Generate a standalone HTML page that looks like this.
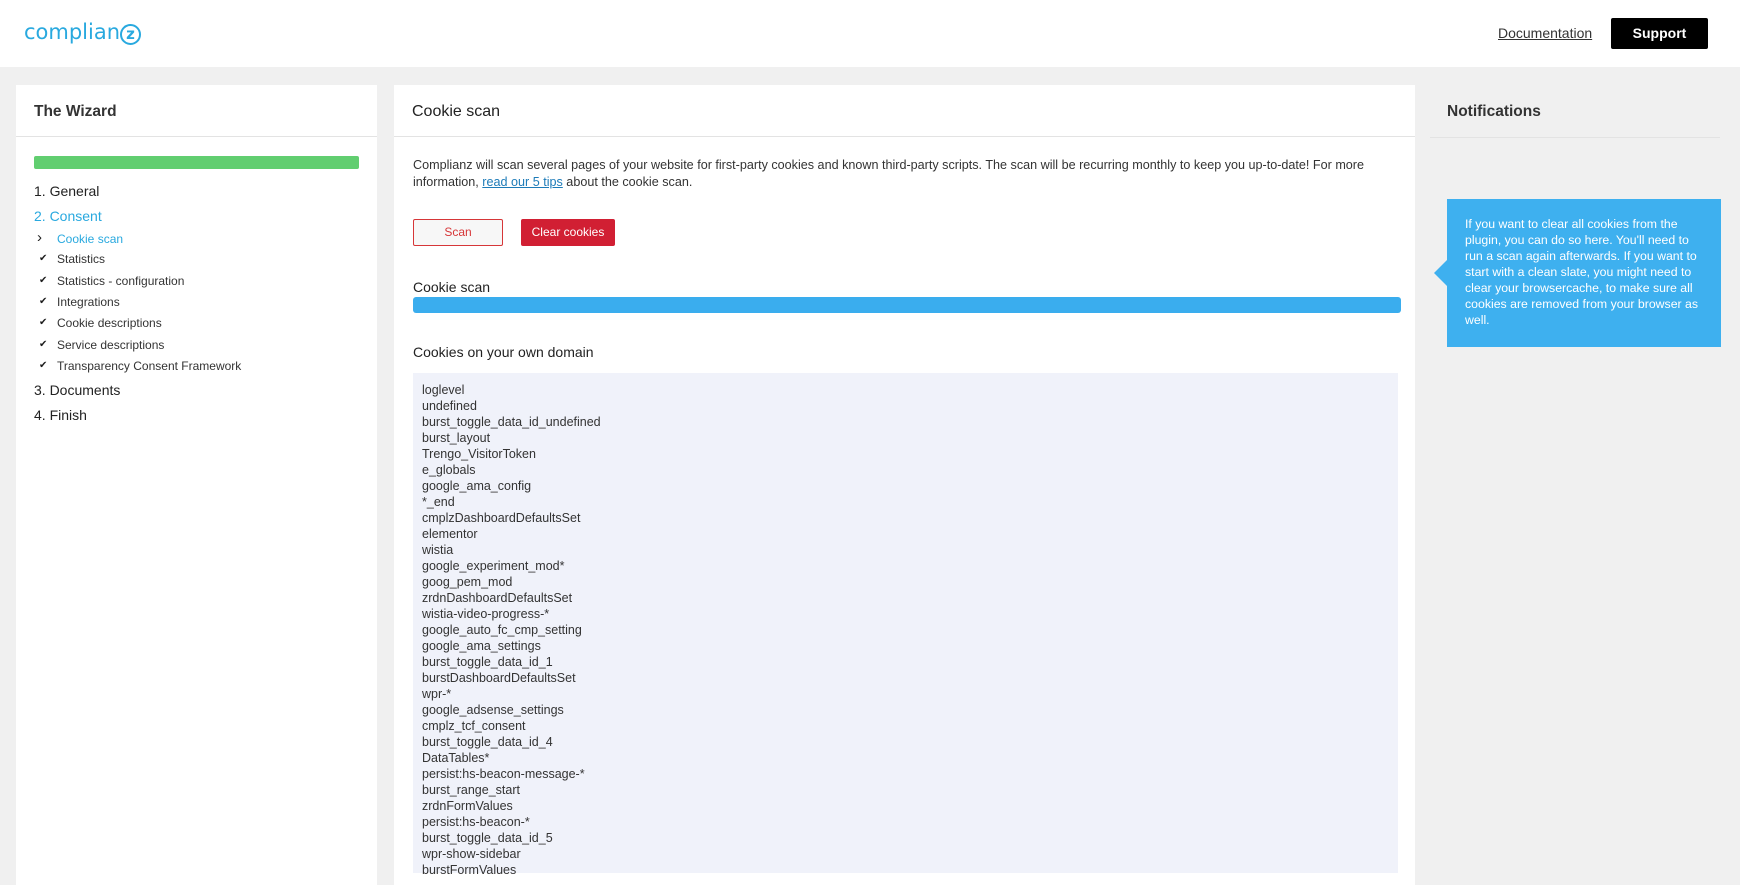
<!DOCTYPE html>
<html><head><meta charset="utf-8"><style>
*{box-sizing:border-box;margin:0;padding:0}
body{width:1740px;height:868px;overflow:hidden;background:#f0f0f0;font-family:"Liberation Sans",sans-serif;color:#1e1e1e;position:relative}
.hdr{position:absolute;left:0;top:0;width:1740px;height:67px;background:#fff}
.logo{position:absolute;left:24px;top:20px;font-size:21px;color:#29a9df;letter-spacing:0;font-family:"DejaVu Sans",sans-serif;font-weight:normal}
.doc{position:absolute;left:1498px;top:25px;font-size:14px;text-decoration:underline;color:#333}
.sup{position:absolute;left:1611px;top:18px;width:97px;height:31px;background:#000;color:#fff;font-size:14px;font-weight:bold;text-align:center;line-height:31px;border-radius:2px}
.panel{position:absolute;top:85px;background:#fff;height:800px}
.ph{height:52px;border-bottom:1px solid #e3e3e3;font-size:15.5px;font-weight:bold;color:#333;padding:18px 0 0 18px}
.abs{position:absolute}
.nav{font-size:14px;color:#222}
.sub{font-size:12px;color:#333}
.chk{position:absolute;left:39px;font-size:10px}
.list{position:absolute;left:413px;top:373px;width:985px;height:500px;background:#f0f2fa;padding:9px 9px;font-size:12.5px;line-height:16px;color:#333}
</style></head><body>
<div class="hdr">
<div class="logo">complian<span style="display:inline-block;width:21px;height:21px;border:2px solid #29a9df;border-radius:50%;font-size:15px;line-height:17px;text-align:center;vertical-align:0px;font-weight:bold">z</span></div>
<div class="doc">Documentation</div>
<div class="sup">Support</div>
</div>

<div class="panel" style="left:16px;width:361px">
<div class="ph" style="padding-left:18px">The Wizard</div>
</div>
<div class="abs" style="left:34px;top:156px;width:325px;height:13px;background:#61ce70;border-radius:2px"></div>
<div class="abs nav" style="left:34px;top:183px">1. General</div>
<div class="abs nav" style="left:34px;top:208px;color:#29a9df">2. Consent</div>
<div class="abs" style="left:37px;top:229px;font-size:15px">&#x203A;</div>
<div class="abs sub" style="left:57px;top:232px;color:#29a9df">Cookie scan</div>
<div class="chk" style="top:253px">✔</div><div class="abs sub" style="left:57px;top:252px">Statistics</div>
<div class="chk" style="top:275px">✔</div><div class="abs sub" style="left:57px;top:274px">Statistics - configuration</div>
<div class="chk" style="top:296px">✔</div><div class="abs sub" style="left:57px;top:295px">Integrations</div>
<div class="chk" style="top:317px">✔</div><div class="abs sub" style="left:57px;top:316px">Cookie descriptions</div>
<div class="chk" style="top:339px">✔</div><div class="abs sub" style="left:57px;top:338px">Service descriptions</div>
<div class="chk" style="top:360px">✔</div><div class="abs sub" style="left:57px;top:359px">Transparency Consent Framework</div>
<div class="abs nav" style="left:34px;top:382px">3. Documents</div>
<div class="abs nav" style="left:34px;top:407px">4. Finish</div>

<div class="panel" style="left:394px;width:1021px">
<div class="ph" style="font-weight:normal;font-size:16px;color:#222">Cookie scan</div>
</div>
<div class="abs" style="left:413px;top:157px;width:990px;font-size:12.6px;line-height:17px;color:#333">Complianz will scan several pages of your website for first-party cookies and known third-party scripts. The scan will be recurring monthly to keep you up-to-date! For more information, <span style="color:#1d7bb8;text-decoration:underline">read our 5 tips</span> about the cookie scan.</div>
<div class="abs" style="left:413px;top:219px;width:90px;height:27px;border:1px solid #d63638;border-radius:2px;background:#f7f7f7;color:#d63638;font-size:12px;text-align:center;line-height:25px">Scan</div>
<div class="abs" style="left:521px;top:219px;width:94px;height:27px;background:#d11f33;border-radius:2px;color:#fff;font-size:12px;text-align:center;line-height:27px">Clear cookies</div>
<div class="abs" style="left:413px;top:279px;font-size:14px;color:#222">Cookie scan</div>
<div class="abs" style="left:413px;top:297px;width:988px;height:16px;background:#3aadee;border-radius:3px"></div>
<div class="abs" style="left:413px;top:344px;font-size:14px;color:#222">Cookies on your own domain</div>
<div class="list">loglevel<br>undefined<br>burst_toggle_data_id_undefined<br>burst_layout<br>Trengo_VisitorToken<br>e_globals<br>google_ama_config<br>*_end<br>cmplzDashboardDefaultsSet<br>elementor<br>wistia<br>google_experiment_mod*<br>goog_pem_mod<br>zrdnDashboardDefaultsSet<br>wistia-video-progress-*<br>google_auto_fc_cmp_setting<br>google_ama_settings<br>burst_toggle_data_id_1<br>burstDashboardDefaultsSet<br>wpr-*<br>google_adsense_settings<br>cmplz_tcf_consent<br>burst_toggle_data_id_4<br>DataTables*<br>persist:hs-beacon-message-*<br>burst_range_start<br>zrdnFormValues<br>persist:hs-beacon-*<br>burst_toggle_data_id_5<br>wpr-show-sidebar<br>burstFormValues</div>

<div class="abs" style="left:1447px;top:103px;font-size:15.5px;font-weight:bold;color:#333">Notifications</div>
<div class="abs" style="left:1430px;top:137px;width:290px;height:1px;background:#e3e3e3"></div>
<div class="abs" style="left:1447px;top:199px;width:274px;height:148px;background:#3eb0ef;color:#fff;font-size:12.3px;line-height:16px;padding:17px 14px 0 18px">If you want to clear all cookies from the plugin, you can do so here. You'll need to run a scan again afterwards. If you want to start with a clean slate, you might need to clear your browsercache, to make sure all cookies are removed from your browser as well.</div>
<div class="abs" style="left:1434px;top:260px;width:0;height:0;border-top:13px solid transparent;border-bottom:13px solid transparent;border-right:13px solid #3eb0ef"></div>
</body></html>
